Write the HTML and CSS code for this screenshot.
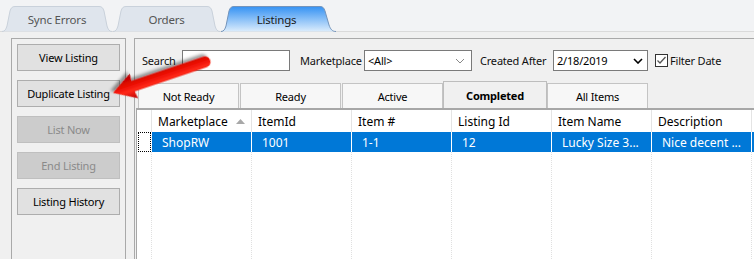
FILE: index.html
```html
<!DOCTYPE html>
<html lang="en">
<head>
  <meta charset="UTF-8" />
  <title>Listings</title>
  <link rel="stylesheet" href="styles.css">
</head>
<body>
  <div class="app">
    <div class="main-tabs">
      <div class="mtab mtab-sync">
        <svg class="mtab-bg" width="110" height="26" viewBox="0 0 110 26">
          <path class="mtab-shape" d="M0,25.5 C3,25.5 4,23 5,20 L8,5 C9,2 10,0.5 13,0.5 L97,0.5 C100,0.5 101,2 102,5 L105,20 C106,23 107,25.5 110,25.5"/>
        </svg>
        <span>Sync Errors</span>
      </div>
      <div class="mtab mtab-orders">
        <svg class="mtab-bg" width="107" height="26" viewBox="0 0 107 26">
          <path class="mtab-shape" d="M0,25.5 C3,25.5 4,23 5,20 L8,5 C9,2 10,0.5 13,0.5 L94,0.5 C97,0.5 98,2 99,5 L102,20 C103,23 104,25.5 107,25.5"/>
        </svg>
        <span>Orders</span>
      </div>
      <div class="mtab mtab-listings active">
        <svg class="mtab-bg" width="115" height="26" viewBox="0 0 115 26">
          <defs>
            <linearGradient id="activeTab" x1="0" y1="0" x2="0" y2="1">
              <stop offset="0" stop-color="#3592f3"/>
              <stop offset="1" stop-color="#dbecfc"/>
            </linearGradient>
          </defs>
          <path class="mtab-shape" d="M0,25.5 C3,25.5 4,23 5,20 L8,5 C9,2 10,0.5 13,0.5 L99,0.5 C102,0.5 103,2 104,5 L108,19 C109.5,23 111,25.5 115,25.5"/>
        </svg>
        <span>Listings</span>
      </div>
    </div>

    <div class="content">
      <div class="side-panel">
        <button class="btn">View Listing</button>
        <button class="btn">Duplicate Listing</button>
        <button class="btn" disabled>List Now</button>
        <button class="btn" disabled>End Listing</button>
        <button class="btn">Listing History</button>
      </div>

      <div class="listing-panel">
        <div class="filters">
          <label class="lbl lbl-search">Search</label>
          <div class="field field-search"></div>
          <label class="lbl lbl-market">Marketplace</label>
          <div class="field field-select">
            <span>&lt;All&gt;</span>
            <svg class="chev chev-light" width="10" height="6" viewBox="0 0 10 6"><path d="M1,1 L5,5 L9,1"/></svg>
          </div>
          <label class="lbl lbl-created">Created After</label>
          <div class="field field-date">
            <span>2/18/2019</span>
            <svg class="chev chev-dark" width="10" height="6" viewBox="0 0 10 6"><path d="M1,1 L5,5 L9,1"/></svg>
          </div>
          <div class="check">
            <svg width="13" height="13" viewBox="0 0 13 13">
              <rect x="0.5" y="0.5" width="12" height="12" fill="#fff" stroke="#333"/>
              <path d="M2.5,6.5 L5,9 L10.5,3" fill="none" stroke="#555" stroke-width="1.3"/>
            </svg>
            <span>Filter Date</span>
          </div>
        </div>

        <div class="sub-tabs">
          <div class="stab">Not Ready</div>
          <div class="stab">Ready</div>
          <div class="stab">Active</div>
          <div class="stab selected">Completed</div>
          <div class="stab">All Items</div>
        </div>

        <div class="tab-page">
          <div class="grid">
            <div class="row head">
              <div class="cell rowhead"></div>
              <div class="cell">Marketplace
                <svg class="sort" width="9" height="5" viewBox="0 0 9 5"><path d="M0,5 L4.5,0 L9,5 Z"/></svg>
              </div>
              <div class="cell">ItemId</div>
              <div class="cell">Item #</div>
              <div class="cell">Listing Id</div>
              <div class="cell">Item Name</div>
              <div class="cell">Description</div>
              <div class="cell"></div>
            </div>
            <div class="row data selected">
              <div class="cell rowhead"><div class="focus"></div></div>
              <div class="cell">ShopRW</div>
              <div class="cell">1001</div>
              <div class="cell">1-1</div>
              <div class="cell">12</div>
              <div class="cell">Lucky Size 3...</div>
              <div class="cell">Nice decent ...</div>
              <div class="cell"></div>
            </div>
            <div class="row filler">
              <div class="cell rowhead"></div>
              <div class="cell"></div>
              <div class="cell"></div>
              <div class="cell"></div>
              <div class="cell"></div>
              <div class="cell"></div>
              <div class="cell"></div>
              <div class="cell"></div>
            </div>
          </div>
        </div>
      </div>
    </div>

    <!-- callout arrow drawn over the window -->
    <svg class="callout" width="754" height="259" viewBox="0 0 754 259">
      <defs>
        <filter id="shadow" x="-20%" y="-50%" width="140%" height="200%">
          <feDropShadow dx="2" dy="3" stdDeviation="1.6" flood-color="#000" flood-opacity="0.4"/>
        </filter>
        <linearGradient id="redFill" x1="0" y1="-13" x2="0" y2="13" gradientUnits="userSpaceOnUse">
          <stop offset="0" stop-color="#b80000"/>
          <stop offset="0.35" stop-color="#ff2a1a"/>
          <stop offset="0.6" stop-color="#e80a00"/>
          <stop offset="1" stop-color="#b00000"/>
        </linearGradient>
      </defs>
      <g transform="translate(205 62) rotate(161.4)" filter="url(#shadow)">
        <path fill="url(#redFill)" d="M0,-5.5 L76,-5.5 L75,-13 L97,0 L75,13 L76,5.5 L0,5.5 A5.5,5.5 0 0 1 0,-5.5 Z"/>
      </g>
    </svg>
  </div>
</body>
</html>
```

FILE: styles.css
```css
body {
  margin: 0;
  background: #f0f0f0;
  font-family: "Noto Sans", "DejaVu Sans", sans-serif;
  font-size: 11px;
  letter-spacing: -0.2px;
  color: #000;
}

.app {
  position: relative;
  width: 754px;
  height: 259px;
  overflow: hidden;
}

/* top level tabs */
.main-tabs {
  display: flex;
  align-items: flex-end;
  gap: 1px;
  height: 31px;
  padding-left: 2px;
  background: #f2f3f5;
  border-bottom: 1px solid #dadada;
}

.mtab {
  position: relative;
  height: 26px;
  margin-bottom: -1px;
  display: flex;
  align-items: center;
  justify-content: center;
  color: #555;
  font-size: 11.5px;
}
.mtab-sync { width: 110px; }
.mtab-orders { width: 107px; }
.mtab-listings { width: 115px; }

.mtab span {
  position: relative;
  padding-top: 1px;
}

.mtab-bg {
  position: absolute;
  left: 0;
  top: 0;
}

.mtab-shape {
  fill: #dfe5ed;
  stroke: #c9d1db;
  stroke-width: 1;
}

.mtab.active { color: #1a1a1a; }
.mtab.active span { padding-right: 4px; }
.mtab.active .mtab-shape {
  fill: url(#activeTab);
  stroke: #7494bb;
}

/* panels */
.content {
  display: flex;
  gap: 8px;
  height: 260px;
  padding: 6px 0 0 11px;
}

.side-panel {
  flex: none;
  width: 115px;
  box-sizing: border-box;
  border: 1px solid #a9a9a9;
  padding: 5px 5px 0 5px;
  display: flex;
  flex-direction: column;
  gap: 9px;
}

.btn {
  height: 27px;
  width: 103px;
  padding: 0;
  background: #e1e1e1;
  border: 1px solid #adadad;
  font-family: inherit;
  font-size: 11px;
  letter-spacing: -0.2px;
  color: #000;
}
.btn:disabled {
  background: #cccccc;
  border-color: #bfbfbf;
  color: #8a8a8a;
}

.listing-panel {
  flex: none;
  width: 640px;
  box-sizing: border-box;
  border: 1px solid #a9a9a9;
  display: flex;
  flex-direction: column;
}

/* filter row */
.filters {
  display: flex;
  align-items: center;
  height: 21px;
  margin-top: 11px;
  padding-left: 7px;
}

.lbl { flex: none; color: #111; }
.lbl-search { width: 40px; }
.lbl-market { width: 64px; margin-left: 10px; }
.lbl-created { width: 73px; margin-left: 8px; }

.field {
  flex: none;
  box-sizing: border-box;
  height: 21px;
  background: #fff;
  border: 1px solid #7a7a7a;
  display: flex;
  align-items: center;
  justify-content: space-between;
  padding: 0 6px 0 3px;
}
.field-search { width: 108px; }
.field-select { width: 108px; }
.field-date { width: 95px; padding-right: 4px; }

.chev path { fill: none; }
.chev-light path { stroke: #888; stroke-width: 1; }
.chev-dark path { stroke: #000; stroke-width: 1.6; }

.check {
  display: flex;
  align-items: center;
  gap: 2px;
  margin-left: 7px;
  color: #111;
}
.check svg { display: block; }

/* sub tabs */
.sub-tabs {
  display: flex;
  align-items: flex-end;
  gap: 1px;
  height: 27px;
  margin-top: 10px;
  padding-left: 3px;
}

.stab {
  box-sizing: border-box;
  width: 101px;
  height: 25px;
  background: #f7f7f7;
  border: 1px solid #c4c4c4;
  border-bottom: none;
  display: flex;
  align-items: center;
  justify-content: center;
  padding-top: 1px;
}
.stab.selected {
  position: relative;
  width: 104px;
  height: 27px;
  margin: 0 -1px 0 -1px;
  background: #f0f0f0;
  border-color: #bdbdbd;
  font-weight: bold;
}

/* tab page and grid */
.tab-page {
  flex: 1;
  margin-left: 1px;
  border-top: 2px solid #a7a7a7;
  border-left: 1px solid #a7a7a7;
  display: flex;
}

.grid {
  flex: 1;
  display: flex;
  flex-direction: column;
  background: #fff;
  font-size: 12px;
  letter-spacing: 0;
}

.row {
  display: flex;
  flex: none;
}
.row.head { height: 22px; }
.row.data { height: 20px; }
.row.filler { flex: 1; }

.cell {
  flex: none;
  box-sizing: border-box;
  width: 100px;
  border-left: 1px solid #e4e4e4;
  display: flex;
  align-items: center;
  white-space: nowrap;
  overflow: hidden;
}
.cell.rowhead {
  width: 14px;
  border-left: none;
  position: relative;
}

.head .cell {
  padding-left: 6px;
  color: #000;
}
.head .cell.rowhead { padding: 0; }

.sort {
  margin-left: 8px;
  fill: #a8a8a8;
}

.data .cell { padding-left: 10px; }
.data .cell.rowhead { padding: 0; }

.row.selected .cell {
  background: #0078d7;
  color: #fff;
  border-left-color: #fff;
}
.row.selected .cell.rowhead { background: #fff; }

.focus {
  position: absolute;
  left: 1px;
  top: 0;
  right: 0;
  bottom: 0;
  border: 1px dotted #000;
}

.filler .cell {
  border-left: 1px dotted #e0e0e0;
}
.filler .cell.rowhead { border-left: none; }

.callout {
  position: absolute;
  left: 0;
  top: 0;
  pointer-events: none;
}
```
